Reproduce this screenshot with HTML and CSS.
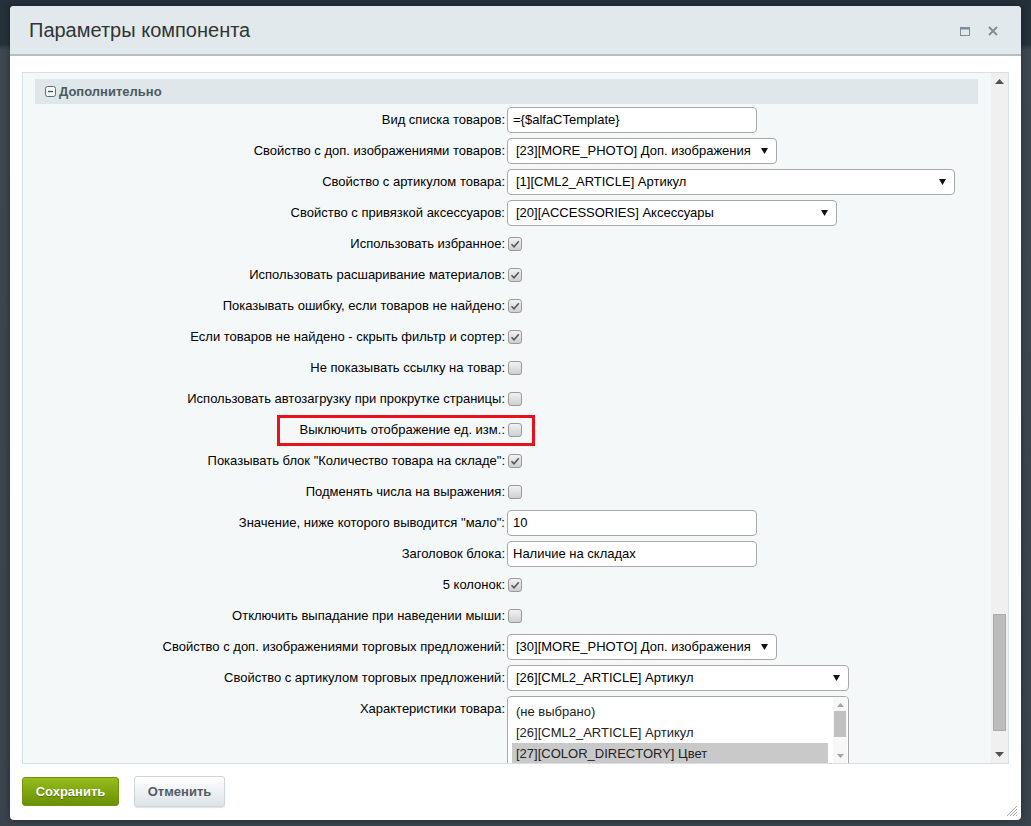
FILE: index.html
```html
<!DOCTYPE html>
<html lang="ru">
<head>
<meta charset="utf-8">
<title>Параметры компонента</title>
<link rel="stylesheet" href="styles.css">
</head>
<body>
<div class="dialog">
  <div class="dlg-head">
    <div class="title">Параметры компонента</div>
    <div class="head-btns">
      <svg class="hb" width="10" height="9" viewBox="0 0 10 9"><rect x="0.5" y="0.5" width="9" height="8" fill="none" stroke="#7d8c99"/><rect x="0.5" y="0.5" width="9" height="2" fill="#7d8c99"/></svg>
      <svg class="hb" width="10" height="10" viewBox="0 0 10 10"><path d="M1 1L9 9M9 1L1 9" stroke="#7d8c99" stroke-width="1.8"/></svg>
    </div>
  </div>
  <div class="dlg-body">
    <div class="panel">
      <div class="panel-content">
        <div class="sect">
          <svg class="minus" width="11" height="11" viewBox="0 0 11 11"><rect x="0.5" y="0.5" width="10" height="10" rx="2" fill="#f3f6f7" stroke="#5d6b73"/><path d="M3 5.5H8" stroke="#3d4b53" stroke-width="1.2"/></svg>
          <span>Дополнительно</span>
        </div>

        <div class="row"><div class="lbl">Вид списка товаров:</div><div class="inp">={$alfaCTemplate}</div></div>
        <div class="row"><div class="lbl">Свойство с доп. изображениями товаров:</div><div class="sel w270"><span>[23][MORE_PHOTO] Доп. изображения</span><svg class="arr" width="7" height="6" viewBox="0 0 7 6"><path d="M0 0H7L3.5 6Z" fill="#111"/></svg></div></div>
        <div class="row"><div class="lbl">Свойство с артикулом товара:</div><div class="sel w448"><span>[1][CML2_ARTICLE] Артикул</span><svg class="arr" width="7" height="6" viewBox="0 0 7 6"><path d="M0 0H7L3.5 6Z" fill="#111"/></svg></div></div>
        <div class="row"><div class="lbl">Свойство с привязкой аксессуаров:</div><div class="sel w330"><span>[20][ACCESSORIES] Аксессуары</span><svg class="arr" width="7" height="6" viewBox="0 0 7 6"><path d="M0 0H7L3.5 6Z" fill="#111"/></svg></div></div>
        <div class="row"><div class="lbl">Использовать избранное:</div><span class="cb on"><svg width="12" height="12" viewBox="0 0 12 12"><path d="M2.5 6.2L5 8.8L9.8 3.2" fill="none" stroke="#555" stroke-width="1.5"/></svg></span></div>
        <div class="row"><div class="lbl">Использовать расшаривание материалов:</div><span class="cb on"><svg width="12" height="12" viewBox="0 0 12 12"><path d="M2.5 6.2L5 8.8L9.8 3.2" fill="none" stroke="#555" stroke-width="1.5"/></svg></span></div>
        <div class="row"><div class="lbl">Показывать ошибку, если товаров не найдено:</div><span class="cb on"><svg width="12" height="12" viewBox="0 0 12 12"><path d="M2.5 6.2L5 8.8L9.8 3.2" fill="none" stroke="#555" stroke-width="1.5"/></svg></span></div>
        <div class="row"><div class="lbl">Если товаров не найдено - скрыть фильтр и сортер:</div><span class="cb on"><svg width="12" height="12" viewBox="0 0 12 12"><path d="M2.5 6.2L5 8.8L9.8 3.2" fill="none" stroke="#555" stroke-width="1.5"/></svg></span></div>
        <div class="row"><div class="lbl">Не показывать ссылку на товар:</div><span class="cb"></span></div>
        <div class="row"><div class="lbl">Использовать автозагрузку при прокрутке страницы:</div><span class="cb"></span></div>
        <div class="row marked"><div class="lbl">Выключить отображение ед. изм.:</div><span class="cb"></span><div class="redbox"></div></div>
        <div class="row"><div class="lbl">Показывать блок "Количество товара на складе":</div><span class="cb on"><svg width="12" height="12" viewBox="0 0 12 12"><path d="M2.5 6.2L5 8.8L9.8 3.2" fill="none" stroke="#555" stroke-width="1.5"/></svg></span></div>
        <div class="row"><div class="lbl">Подменять числа на выражения:</div><span class="cb"></span></div>
        <div class="row"><div class="lbl">Значение, ниже которого выводится "мало":</div><div class="inp">10</div></div>
        <div class="row"><div class="lbl">Заголовок блока:</div><div class="inp">Наличие на складах</div></div>
        <div class="row"><div class="lbl">5 колонок:</div><span class="cb on"><svg width="12" height="12" viewBox="0 0 12 12"><path d="M2.5 6.2L5 8.8L9.8 3.2" fill="none" stroke="#555" stroke-width="1.5"/></svg></span></div>
        <div class="row"><div class="lbl">Отключить выпадание при наведении мыши:</div><span class="cb"></span></div>
        <div class="row"><div class="lbl">Свойство с доп. изображениями торговых предложений:</div><div class="sel w270"><span>[30][MORE_PHOTO] Доп. изображения</span><svg class="arr" width="7" height="6" viewBox="0 0 7 6"><path d="M0 0H7L3.5 6Z" fill="#111"/></svg></div></div>
        <div class="row"><div class="lbl">Свойство с артикулом торговых предложений:</div><div class="sel w342"><span>[26][CML2_ARTICLE] Артикул</span><svg class="arr" width="7" height="6" viewBox="0 0 7 6"><path d="M0 0H7L3.5 6Z" fill="#111"/></svg></div></div>
        <div class="row tall"><div class="lbl">Характеристики товара:</div>
          <div class="listbox">
            <div class="items">
              <div class="item">(не выбрано)</div>
              <div class="item">[26][CML2_ARTICLE] Артикул</div>
              <div class="item sel-item">[27][COLOR_DIRECTORY] Цвет</div>
            </div>
            <div class="lb-scroll">
              <svg class="lb-arr" width="7" height="4" viewBox="0 0 7 4"><path d="M0 4H7L3.5 0Z" fill="#a3a3a3"/></svg>
              <div class="lb-thumb"></div>
              <svg class="lb-arr dn" width="7" height="4" viewBox="0 0 7 4"><path d="M0 0H7L3.5 4Z" fill="#a3a3a3"/></svg>
            </div>
          </div>
        </div>
      </div>
      <div class="sbar">
        <div class="sb-btn"><svg width="9" height="5" viewBox="0 0 9 5"><path d="M0 5H9L4.5 0Z" fill="#505050"/></svg></div>
        <div class="sb-track"><div class="sb-thumb"></div></div>
        <div class="sb-btn"><svg width="9" height="5" viewBox="0 0 9 5"><path d="M0 0H9L4.5 5Z" fill="#505050"/></svg></div>
      </div>
    </div>
  </div>
  <div class="footer">
    <div class="btn save">Сохранить</div>
    <div class="btn cancel">Отменить</div>
  </div>
  <svg class="grip" width="12" height="12" viewBox="0 0 12 12"><path d="M11 1L1 11M11 4L4 11M11 7L7 11M11 10L10 11" stroke="#a9a9a9" stroke-width="1"/></svg>
</div>
</body>
</html>
```
FILE: styles.css
```css
html, body {
  margin: 0;
  padding: 0;
}
body {
  width: 1031px;
  height: 826px;
  overflow: hidden;
  background: linear-gradient(to bottom, #24303a 0, #24303a 44px, #3d474f 50px, #39434b 100%);
  font-family: "Liberation Sans", Arial, sans-serif;
  padding-top: 6px;
  box-sizing: border-box;
}
.dialog {
  position: relative;
  margin-left: 10px;
  width: 1011px;
  height: 814px;
  background: #fff;
  border-radius: 4px;
  display: flex;
  flex-direction: column;
  box-shadow: 0 0 6px rgba(0, 0, 0, 0.35);
}
.dlg-head {
  flex: none;
  height: 48px;
  background: #e1e9ec;
  border-bottom: 2px solid #b8bdc0;
  border-radius: 4px 4px 0 0;
  display: flex;
  align-items: center;
  padding-left: 19px;
}
.title {
  flex: 1;
  font-size: 20px;
  color: #333;
}
.head-btns {
  display: flex;
  align-items: center;
  gap: 18px;
  padding-right: 23px;
  padding-top: 2px;
}
.hb { display: block; }
.dlg-body {
  flex: none;
  padding: 16px 12px 0;
}
.panel {
  height: 692px;
  box-sizing: border-box;
  border: 1px solid #d4e1e9;
  background: #f5f8f9;
  display: flex;
}
.panel-content {
  flex: 1;
  min-width: 0;
  padding: 6px 13px 0 12px;
  overflow: hidden;
}
.sect {
  height: 25px;
  background: #e0e7ea;
  display: flex;
  align-items: center;
  padding-left: 10px;
  gap: 3px;
  font-size: 13px;
  font-weight: bold;
  color: #4b5a62;
}
.minus { display: block; }
.row {
  position: relative;
  display: grid;
  grid-template-columns: 470px auto;
  column-gap: 2px;
  height: 31px;
  align-items: center;
  justify-content: start;
}
.lbl {
  text-align: right;
  font-size: 13px;
  color: #000;
  white-space: nowrap;
}
.inp {
  width: 250px;
  height: 26px;
  box-sizing: border-box;
  border: 1px solid #a8a8a8;
  border-radius: 4px;
  background: #fff;
  font-size: 13px;
  line-height: 24px;
  padding-left: 5px;
  color: #000;
}
.sel {
  height: 26px;
  box-sizing: border-box;
  border: 1px solid #a8a8a8;
  border-radius: 4px;
  background: #fff;
  font-size: 13px;
  color: #000;
  display: flex;
  align-items: center;
  padding: 0 8px 0 8px;
}
.sel span { flex: 1; white-space: nowrap; }
.arr { display: block; }
.w270 { width: 270px; }
.w448 { width: 448px; }
.w330 { width: 330px; }
.w342 { width: 342px; }
.cb {
  width: 14px;
  height: 14px;
  box-sizing: border-box;
  border: 1px solid #9a9a9a;
  border-radius: 3px;
  background: linear-gradient(to bottom, #f2f2f2, #cfcfcf);
  display: flex;
  align-items: center;
  justify-content: center;
  margin-left: 1px;
}
.cb svg { display: block; }
.redbox {
  position: absolute;
  left: 242px;
  top: 1px;
  width: 258px;
  height: 31px;
  box-sizing: border-box;
  border: 3px solid #e8111c;
}
.row.tall {
  height: auto;
  align-items: start;
}
.row.tall .lbl { line-height: 31px; }
.listbox {
  margin-top: 3px;
  width: 342px;
  height: 100px;
  box-sizing: border-box;
  border: 1px solid #a8a8a8;
  border-radius: 4px 4px 0 0;
  background: #fff;
  display: flex;
  padding: 4px 1px 0 4px;
  gap: 5px;
}
.items { flex: 1; }
.item {
  height: 21px;
  line-height: 21px;
  font-size: 13px;
  color: #222;
  padding-left: 4px;
  white-space: nowrap;
}
.sel-item { background: #c9c9c9; }
.lb-scroll {
  width: 14px;
  margin-top: -4px;
  background: #f7f7f7;
  display: flex;
  flex-direction: column;
  align-items: center;
}
.lb-arr { display: block; margin-top: 6px; }
.lb-thumb {
  width: 12px;
  height: 26px;
  margin-top: 4px;
  background: #c1c1c1;
}
.lb-arr.dn { margin-top: 17px; }
.sbar {
  flex: none;
  width: 17px;
  background: #f0f0f0;
  display: flex;
  flex-direction: column;
}
.sb-btn {
  height: 17px;
  display: flex;
  align-items: center;
  justify-content: center;
}
.sb-btn svg { display: block; }
.sb-track {
  flex: 1;
  display: flex;
  flex-direction: column;
  justify-content: flex-end;
  align-items: center;
  padding-bottom: 15px;
}
.sb-thumb {
  width: 11px;
  height: 115px;
  background: #bcbcbc;
  border: 1px solid #ababab;
}
.footer {
  flex: none;
  padding: 12px 12px 0;
  display: flex;
  align-items: center;
  gap: 15px;
}
.btn {
  box-sizing: border-box;
  border-radius: 3px;
  font-size: 13px;
  font-weight: bold;
  display: flex;
  align-items: center;
  justify-content: center;
}
.save {
  width: 97px;
  height: 29px;
  color: #fff;
  background: linear-gradient(to bottom, #96bc1e, #6a9100);
  border: 1px solid #6e920b;
  text-shadow: 0 1px 1px rgba(0, 0, 0, 0.3);
}
.cancel {
  width: 91px;
  height: 31px;
  color: #535c66;
  background: linear-gradient(to bottom, #ffffff, #dde3e6);
  border: 1px solid #cfd5d8;
  box-shadow: 0 1px 1px rgba(0, 0, 0, 0.12);
}
.grip {
  position: absolute;
  right: 3px;
  bottom: 3px;
  display: block;
}
```
